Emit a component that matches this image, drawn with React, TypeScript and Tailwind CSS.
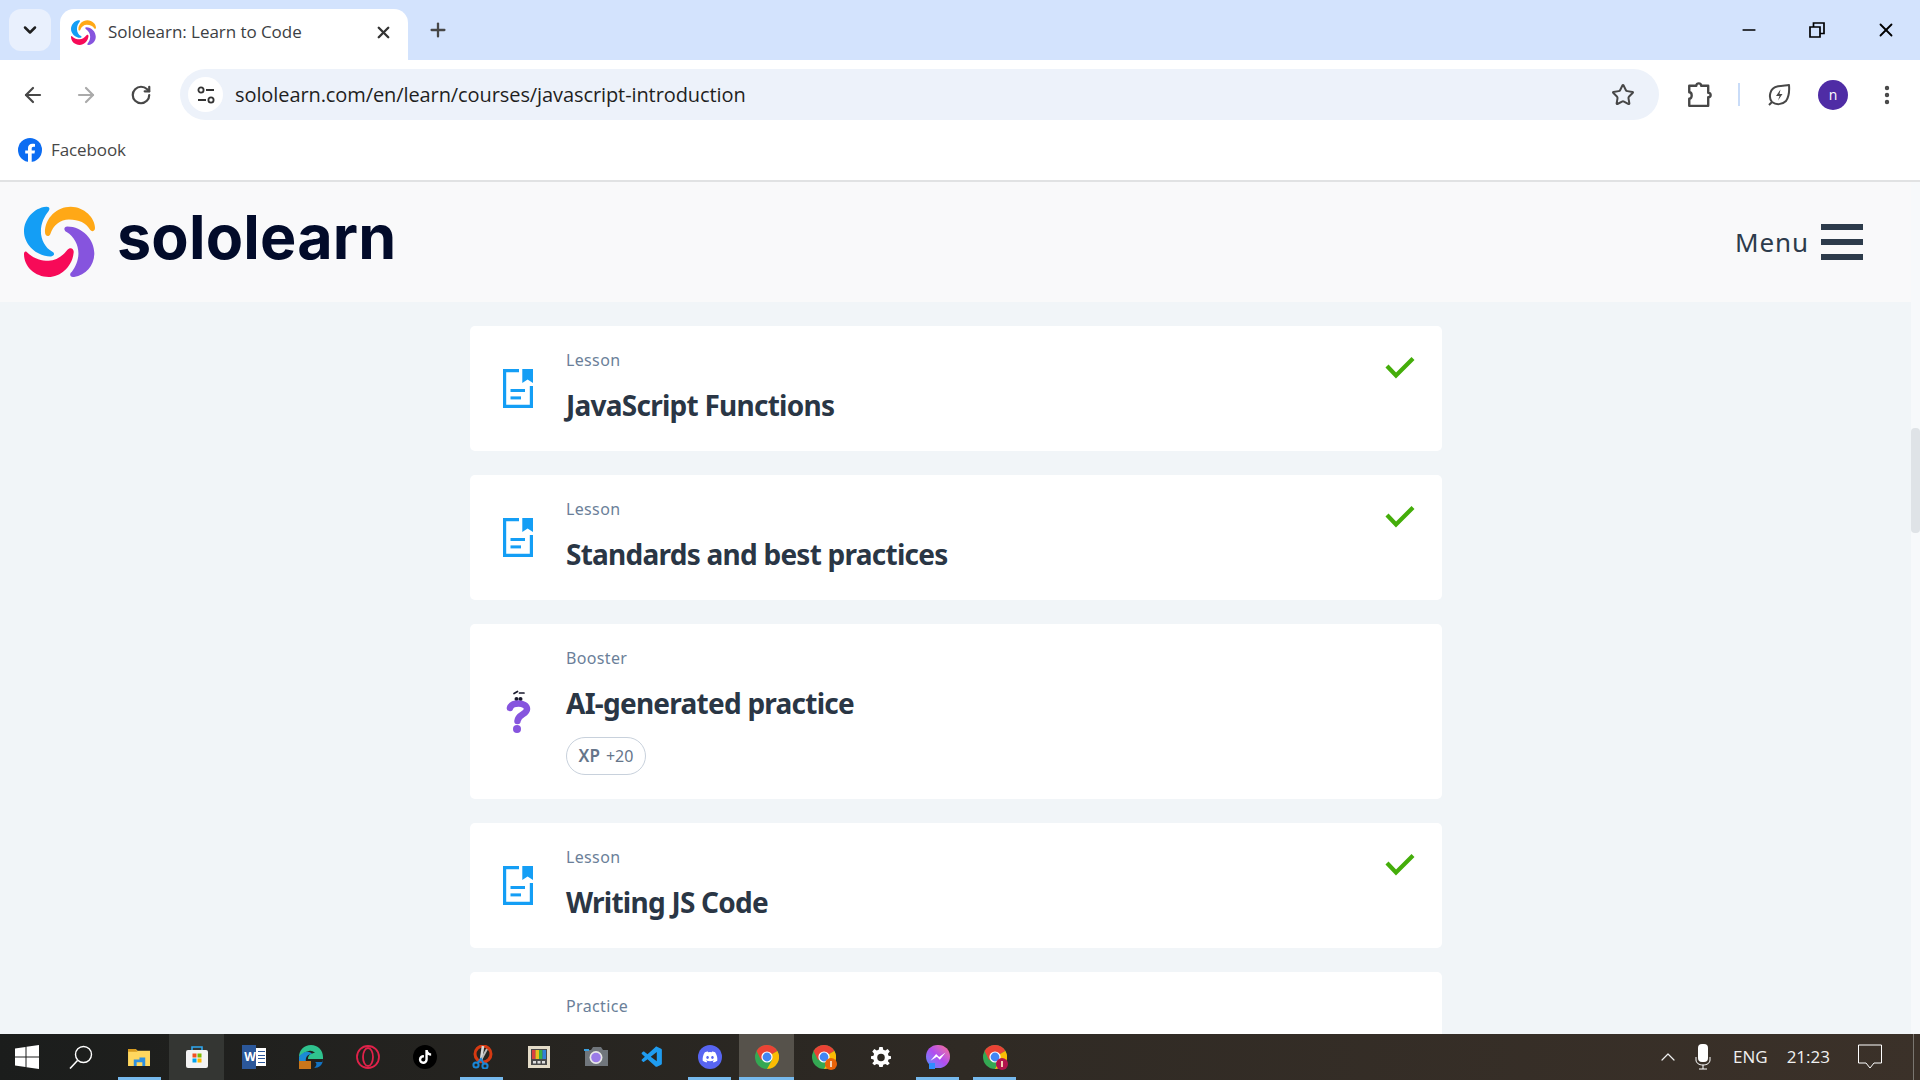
import { ArrowLeft, ArrowRight, ChevronDown, ChevronUp, EllipsisVertical, Minus, Plus, RotateCw, Star, X } from "lucide-react";
import { FaDiscord, FaTiktok } from "react-icons/fa";
import { VscVscode } from "react-icons/vsc";

function SoloLogo({ className }: { className: string }) {
  return (
    <svg viewBox="42 35 210 210" className={className}>
      <path fill="#149ef5" d="M108 37C70 40 42 75 42 110C42 150 80 185 122 184C132 183 134 174 126 170C105 160 92 135 92 110C92 85 103 65 115 50C120 42 116 36 108 37Z" />
      <path fill="#ffa816" d="M104 112C104 70 140 37 180 37C220 37 252 70 252 100C252 110 242 112 238 106C225 85 205 75 175 75C150 75 128 92 120 118C116 128 104 125 104 112Z" />
      <path fill="#8654de" d="M170 96C215 96 250 135 250 175C250 210 225 240 190 245C178 246 175 236 183 230C195 215 203 195 203 175C203 150 190 125 168 112C158 106 160 96 170 96Z" />
      <path fill="#f70a58" d="M50 171C70 190 90 197 115 197C135 197 155 185 170 165C178 155 190 160 189 172C185 215 150 245 115 245C75 245 42 215 42 178C42 170 46 168 50 171Z" />
    </svg>
  );
}

function LessonIcon() {
  return (
    <svg viewBox="0 0 30 39" className="w-[30px] h-[39px]">
      <path d="M16 1.6H1.6V37.4H28.4V17" fill="none" stroke="#149ef5" strokeWidth="3.2" />
      <path d="M19.3 0H30V14L24.6 10.5L19.3 14Z" fill="#149ef5" />
      <rect x="7.5" y="20" width="14.5" height="3" fill="#149ef5" />
      <rect x="7.5" y="27.4" width="10.5" height="3" fill="#149ef5" />
    </svg>
  );
}

function BoosterIcon() {
  return (
    <svg viewBox="0 0 25 43" className="w-[25px] h-[43px] ml-[3px]">
      <path d="M8 3.5L11.5 1.5M13.5 3H18" stroke="#1a1a2e" strokeWidth="1.7" fill="none" strokeLinecap="round" />
      <circle cx="10.5" cy="9" r="2" fill="#1a1a2e" />
      <circle cx="14.5" cy="9" r="2" fill="#1a1a2e" />
      <path d="M4 18C5 14.500 8.500 13.500 12.500 13.500C17 13.500 21 15.500 21 19C21 24.500 12 24 11.500 31" fill="none" stroke="#8654de" strokeWidth="6.5" strokeLinecap="round" />
      <circle cx="11" cy="39" r="4" fill="#8654de" />
    </svg>
  );
}

function Check() {
  return (
    <svg viewBox="0 0 30 23" className="w-[30px] h-[23px]">
      <path d="M2 10L11 19.5L28 2.5" fill="none" stroke="#44ad0a" strokeWidth="4.2" />
    </svg>
  );
}

function Card({ kind, title, done, xp }: { kind: string; title?: string; done?: boolean; xp?: boolean }) {
  return (
    <div className="flex items-center bg-white rounded-[5px] pl-[33px] pr-[27px]">
      <div className="w-[63px] shrink-0">{title ? (xp ? <BoosterIcon /> : <LessonIcon />) : null}</div>
      <div className={`flex-1 pt-[24px] ${xp ? "pb-[24px]" : title ? "pb-[28px]" : "pb-[60px]"}`}>
        <div className="text-[16px] leading-[21px] tracking-[0.35px] text-[#6b7f99] font-['Noto_Sans',sans-serif]">{kind}</div>
        {title && <div className="mt-[16px] text-[28px] leading-[36px] font-bold tracking-[-0.75px] text-[#2a3645] font-['Noto_Sans',sans-serif]">{title}</div>}
        {xp && (
          <div className="mt-[16px] w-[80px] h-[38px] border border-[#c8d1dc] rounded-[19px] flex items-center justify-center gap-[6px] text-[#66758a] font-['Noto_Sans',sans-serif]">
            <span className="text-[17px] font-semibold">XP</span>
            <span className="text-[16px]">+20</span>
          </div>
        )}
      </div>
      {done && <div className="self-start mt-[30px]"><Check /></div>}
    </div>
  );
}

function ChromeIcon({ badge }: { badge?: string }) {
  return (
    <div className="relative w-[24px] h-[24px]">
      <svg viewBox="0 0 24 24" className="w-[24px] h-[24px]">
        <circle cx="12" cy="12" r="12" fill="#34a853" />
        <path d="M12 12L22.4 6A12 12 0 0 0 1.6 6L6 15Z" fill="#ea4335" />
        <path d="M12 12L22.4 6A12 12 0 0 1 12 24L17 15Z" fill="#fbbc04" />
        <circle cx="12" cy="12" r="5.6" fill="white" />
        <circle cx="12" cy="12" r="4.4" fill="#4285f4" />
      </svg>
      {badge && (
        <div className="absolute -right-[1px] -bottom-[1px] w-[12px] h-[12px] rounded-full flex items-center justify-center" style={{ background: badge }}>
          <div className="w-[2px] h-[6px] bg-[#f5d0b5]" />
        </div>
      )}
    </div>
  );
}

function TaskCell({ children, open, active, hover }: { children: React.ReactNode; open?: boolean; active?: boolean; hover?: boolean }) {
  return (
    <div className={`relative h-full flex items-center justify-center ${active ? "bg-[#56524b] mx-px w-[55px]" : hover ? "bg-[#343633] mx-px w-[55px]" : "w-[57px]"}`}>
      {children}
      {open && <div className={`absolute bottom-0 h-[3px] bg-[#76b9ed] ${active ? "left-0 right-0" : "left-[7px] right-[7px]"}`} />}
    </div>
  );
}

export default function App() {
  return (
    <div className="w-[1920px] h-[1080px] flex flex-col overflow-hidden bg-white font-['Open_Sans',sans-serif]">
      {/* tab strip */}
      <div className="h-[60px] shrink-0 bg-[#d3e3fd] flex items-end relative">
        <div className="self-start mt-[9px] ml-[9px] w-[42px] h-[42px] rounded-[12px] bg-[#e9f0fd] flex items-center justify-center">
          <ChevronDown size={20} strokeWidth={3} className="text-[#1f1f1f]" />
        </div>
        <div className="ml-[9px] w-[348px] h-[51px] bg-white rounded-t-[14px] flex items-center pl-[11px] pr-[15px] pb-[5px]">
          <SoloLogo className="w-[25px] h-[25px]" />
          <span className="ml-[12px] text-[17px] tracking-[-0.05px] text-[#3c4043] flex-1">Sololearn: Learn to Code</span>
          <X size={19} strokeWidth={3} className="text-[#333]" />
        </div>
        <Plus size={22} strokeWidth={2.5} className="ml-[19px] mb-[19px] text-[#474747]" />
        <div className="ml-auto h-full flex items-center mr-[23px] gap-[50px]">
          <Minus size={20} strokeWidth={2} className="text-black" />
          <svg viewBox="0 0 16 16" className="w-[16px] h-[16px]"><path d="M1 5H11V15H1ZM4.5 5V1H15V11.5H11" fill="none" stroke="black" strokeWidth="1.7" /></svg>
          <X size={22} strokeWidth={2} className="text-black" />
        </div>
      </div>
      {/* toolbar */}
      <div className="h-[69px] shrink-0 flex items-center bg-white rounded-t-[12px] pl-[21px]">
        <ArrowLeft size={24} strokeWidth={2.2} className="text-[#474747]" />
        <ArrowRight size={24} strokeWidth={2.2} className="ml-[29px] text-[#aaaaaa]" />
        <RotateCw size={22} strokeWidth={2.4} className="ml-[32px] text-[#474747]" />
        <div className="ml-[28px] w-[1479px] h-[51px] rounded-full bg-[#edf2fa] flex items-center pl-[8px] pr-[24px]">
          <div className="w-[35px] h-[35px] rounded-full bg-white flex items-center justify-center">
            <svg viewBox="0 0 20 20" className="w-[20px] h-[20px]"><circle cx="5" cy="5" r="2.6" fill="none" stroke="#333" strokeWidth="1.8" /><path d="M10 5H18M2 15H10" stroke="#333" strokeWidth="1.8" /><circle cx="15" cy="15" r="2.6" fill="none" stroke="#333" strokeWidth="1.8" /></svg>
          </div>
          <span className="ml-[12px] text-[20px] tracking-[-0.09px] text-[#1f1f1f] flex-1">sololearn.com/en/learn/courses/javascript-introduction</span>
          <Star size={24} strokeWidth={2} className="text-[#474747]" />
        </div>
        <svg viewBox="0 0 24 24" className="ml-[27px] w-[26px] h-[26px]"><path d="M3 3.5H9.5C9.5 0.5 14 0.5 14 3.5H20.5V10C23.5 10 23.5 14 20.5 14V22H3V15.5C6 15.5 6 9.5 3 9.5Z" fill="none" stroke="#474747" strokeWidth="2.2" strokeLinejoin="round" /></svg>
        <div className="ml-[26px] w-[2px] h-[23px] bg-[#c9dcf8]" />
        <svg viewBox="0 0 24 24" className="ml-[27px] w-[24px] h-[24px]"><path d="M2 22L5 19C1 14 3 5 10 3.5C14 2.5 19 2.5 22 2C22.5 8 22 14 19 18C15 22 9 22 5 19" fill="none" stroke="#474747" strokeWidth="2" strokeLinejoin="round" /><path d="M13.5 6.5L9 13H12.5L11 17.5L15.5 11H12.5Z" fill="#474747" /></svg>
        <div className="ml-[27px] w-[30px] h-[30px] rounded-full bg-[#4f2ca5] text-white text-[14px] flex items-center justify-center">n</div>
        <EllipsisVertical size={24} strokeWidth={2.4} className="ml-[27px] text-[#474747]" />
      </div>
      {/* bookmarks */}
      <div className="h-[53px] shrink-0 border-b-2 border-[#e1e2e3] flex items-center pl-[18px] pb-[9px]">
        <svg viewBox="0 0 24 24" className="w-[24px] h-[24px]">
          <circle cx="12" cy="12" r="12" fill="#0b6cf2" />
          <path d="M16.5 15.5L17 12.5H13.7V10.4C13.7 9.5 14.2 8.7 15.5 8.7H17V6C17 6 15.7 5.8 14.4 5.8C11.7 5.8 10 7.4 10 10V12.5H7.2V15.5H10V24H13.7V15.5Z" fill="white" />
        </svg>
        <span className="ml-[9px] text-[17px] tracking-[-0.1px] text-[#474747]">Facebook</span>
      </div>
      {/* page */}
      <div className="flex-1 min-h-0 flex">
        <div className="flex-1 min-w-0 flex flex-col bg-[#f1f5f8] overflow-hidden">
          <div className="h-[120px] shrink-0 bg-[#f9f9fa] flex items-center pl-[24px] pr-[48px]">
            <SoloLogo className="w-[71px] h-[71px] -mt-[2px]" />
            <span className="ml-[22px] text-[61px] leading-none font-bold text-[#020b2a] font-[Inter,sans-serif] -mt-[10px] tracking-[0.2px]">sololearn</span>
            <span className="ml-auto text-[26px] tracking-[0.9px] text-[#2d3b4b] font-['Noto_Sans',sans-serif]">Menu</span>
            <div className="ml-[12px] w-[42px] flex flex-col gap-[9px]">
              <div className="h-[6px] bg-[#2d3b4b]" />
              <div className="h-[6px] bg-[#2d3b4b]" />
              <div className="h-[6px] bg-[#2d3b4b]" />
            </div>
          </div>
          <div className="w-[972px] ml-[470px] mt-[24px] flex flex-col gap-[24px]">
            <Card kind="Lesson" title="JavaScript Functions" done />
            <Card kind="Lesson" title="Standards and best practices" done />
            <Card kind="Booster" title="AI-generated practice" xp />
            <Card kind="Lesson" title="Writing JS Code" done />
            <Card kind="Practice" />
          </div>
        </div>
        <div className="w-[9px] shrink-0 bg-[#f7f9fb] pt-[246px]">
          <div className="w-[9px] h-[105px] rounded-[4px] bg-[#dfe3e7]" />
        </div>
      </div>
      {/* taskbar */}
      <div className="h-[46px] shrink-0 flex items-center bg-linear-to-r from-[#1b1d1c] via-[#2f2a24] via-50% to-[#3b3129] text-white">
        <div className="w-[54px] h-full flex items-center justify-center">
          <svg viewBox="0 0 24 24" className="w-[24px] h-[24px]"><path d="M0 3.4L10.5 2V11.5H0ZM11.5 1.8L24 0V11.5H11.5ZM0 12.5H10.5V22L0 20.6ZM11.5 12.5H24V24L11.5 22.2Z" fill="white" /></svg>
        </div>
        <div className="w-[54px] h-full flex items-center justify-center">
          <svg viewBox="0 0 24 24" className="w-[24px] h-[24px]"><circle cx="14.5" cy="9.5" r="8" fill="none" stroke="white" strokeWidth="1.4" /><path d="M8.5 15.5L1 23.5" stroke="white" strokeWidth="1.6" /></svg>
        </div>
        <div className="w-[3px]" />
        <TaskCell open>
          <svg viewBox="0 0 24 22" className="w-[23px] h-[21px]"><path d="M0 2H8L10 4H23V20H0Z" fill="#ffd75e" /><path d="M0 2H8L10 5H0Z" fill="#d79b1f" /><path d="M6 13H12V11H18V20H15V16H9V20H6Z" fill="#2d8fe0" /></svg>
        </TaskCell>
        <TaskCell hover>
          <svg viewBox="0 0 24 24" className="w-[24px] h-[24px]"><path d="M7 5V2H17V5" fill="none" stroke="#2fa8f0" strokeWidth="1.6" /><rect x="1" y="5" width="22" height="18" rx="2" fill="#f3f3f3" /><rect x="7.5" y="8.5" width="4" height="4" fill="#f25022" /><rect x="12.5" y="8.5" width="4" height="4" fill="#7fba00" /><rect x="7.5" y="13.5" width="4" height="4" fill="#00a4ef" /><rect x="12.5" y="13.5" width="4" height="4" fill="#ffb900" /></svg>
        </TaskCell>
        <TaskCell>
          <div className="relative w-[24px] h-[24px]">
            <div className="absolute right-0 top-[3px] w-[13px] h-[18px] bg-white flex flex-col justify-around py-[2px] pl-[5px] pr-[1px]">
              <div className="h-[1px] bg-[#2b579a]" /><div className="h-[1px] bg-[#2b579a]" /><div className="h-[1px] bg-[#2b579a]" /><div className="h-[1px] bg-[#2b579a]" />
            </div>
            <div className="absolute left-0 top-0 w-[14px] h-[24px] bg-[#2b579a] flex items-center justify-center pl-[3px] text-[12px] font-bold text-white">W</div>
          </div>
        </TaskCell>
        <TaskCell>
          <div className="relative w-[24px] h-[24px]">
            <svg viewBox="0 0 24 24" className="w-[24px] h-[24px]"><path d="M0 12C0 5 5 0 12 0C19 0 24 5 24 12V14H9C9 10 12 8 16 8C14 6 12 5.500 10 6C5 7 3 10 0 12Z" fill="#2fc28e" /><path d="M24 14C24 20 20 23 15 23C18 21 18 18 16 17H24Z" fill="#1273c4" /><path d="M0 12C3 7 10 5 13 9C8 9 6 13 7 17H0Z" fill="#1b8ad6" /></svg>
            <div className="absolute left-0 bottom-0 w-[12px] h-[8px] bg-[#c8761b]" />
          </div>
        </TaskCell>
        <TaskCell>
          <svg viewBox="0 0 24 24" className="w-[24px] h-[24px]"><circle cx="12" cy="12" r="11" fill="none" stroke="#e0224a" strokeWidth="1.8" /><ellipse cx="12" cy="12" rx="5" ry="9" fill="none" stroke="#e0224a" strokeWidth="1.8" /></svg>
        </TaskCell>
        <TaskCell>
          <div className="w-[24px] h-[24px] rounded-full bg-black flex items-center justify-center">
            <FaTiktok size={14} className="text-white" />
          </div>
        </TaskCell>
        <TaskCell open>
          <svg viewBox="0 0 24 24" className="w-[24px] h-[24px]"><circle cx="13" cy="9" r="8" fill="none" stroke="#d63a12" strokeWidth="3" /><path d="M13 1L11 15" stroke="#d8d8d8" strokeWidth="2.6" /><path d="M17 4L11 15" stroke="#bbbbbb" strokeWidth="2" /><circle cx="6" cy="20" r="2.6" fill="none" stroke="#1a86d6" strokeWidth="2" /><circle cx="15" cy="21" r="2.6" fill="none" stroke="#1a86d6" strokeWidth="2" /><path d="M7.500 18L11 14L14 19" fill="none" stroke="#1a86d6" strokeWidth="2" /></svg>
        </TaskCell>
        <TaskCell>
          <svg viewBox="0 0 22 22" className="w-[22px] h-[22px]"><rect x="0" y="0" width="22" height="22" fill="#e4dcc8" /><rect x="3" y="3" width="16" height="16" fill="#4a4a4a" /><rect x="4" y="4" width="3.500" height="9" fill="#d94040" /><rect x="7.500" y="4" width="3.500" height="9" fill="#e8c020" /><rect x="11" y="4" width="3.500" height="9" fill="#38b048" /><rect x="14.500" y="4" width="3.500" height="9" fill="#3080d8" /><rect x="5" y="15" width="3" height="2.500" fill="#ddd" /><rect x="9.500" y="15" width="3" height="2.500" fill="#ddd" /><rect x="14" y="15" width="3" height="2.500" fill="#ddd" /></svg>
        </TaskCell>
        <TaskCell>
          <svg viewBox="0 0 24 20" className="w-[24px] h-[20px]"><path d="M1 3H7L9 0H17L19 3H24V19H1Z" fill="#70767c" /><rect x="0" y="2" width="5" height="2" fill="#3aa0e0" /><circle cx="12" cy="10.500" r="6.500" fill="#e8e8e8" /><circle cx="12" cy="10.500" r="4.800" fill="#9a7be8" /></svg>
        </TaskCell>
        <TaskCell>
          <VscVscode size={25} className="text-[#1f9cf0]" />
        </TaskCell>
        <TaskCell open>
          <div className="w-[24px] h-[24px] rounded-full bg-[#5865f2] flex items-center justify-center">
            <FaDiscord size={16} className="text-white" />
          </div>
        </TaskCell>
        <TaskCell open active>
          <ChromeIcon />
        </TaskCell>
        <TaskCell>
          <ChromeIcon badge="#e8630a" />
        </TaskCell>
        <TaskCell>
          <svg viewBox="0 0 24 24" className="w-[20px] h-[20px]"><path fill="white" d="M10 0H14L14.700 3.200L17.200 4.200L20 2.500L22.500 5.500L20.300 8L21 10.500L24 11V14L21 15L20.300 17L22.500 19.500L20 22L17.200 20.300L14.700 21.300L14 24H10L9.300 21.300L6.800 20.300L4 22L1.500 19.500L3.700 17L3 15L0 14V11L3 10.500L3.700 8L1.500 5.500L4 2.500L6.800 4.200L9.300 3.200Z" /><circle cx="12" cy="12.500" r="4.500" fill="#2c2822" /></svg>
        </TaskCell>
        <TaskCell open>
          <div className="relative w-[24px] h-[24px]">
            <div className="w-[24px] h-[23px] rounded-full bg-linear-to-tr from-[#2f8cff] via-[#b14cf0] to-[#ff6a88]" />
            <div className="absolute left-[3px] bottom-0 w-[6px] h-[6px] bg-[#2f8cff]" />
            <svg viewBox="0 0 24 24" className="absolute left-[3px] top-[3px] w-[18px] h-[18px]"><path d="M2 17L9.500 8L13.500 12L22 6L14.500 15.500L10.500 11.500Z" fill="white" /></svg>
          </div>
        </TaskCell>
        <TaskCell open>
          <ChromeIcon badge="#b3134d" />
        </TaskCell>
        <div className="ml-auto h-full flex items-center text-[#f0f0f0]">
          <ChevronUp size={24} strokeWidth={1.2} />
          <svg viewBox="0 0 16 26" className="ml-[15px] w-[16px] h-[26px]"><rect x="3" y="0" width="10" height="18" rx="4" fill="white" /><path d="M1 13V16C1 19 4 21 8 21C12 21 15 19 15 16V13M8 21V25M4 25H12" fill="none" stroke="white" strokeWidth="1" /></svg>
          <span className="ml-[22px] text-[17px]">ENG</span>
          <span className="ml-[19px] text-[17px]">21:23</span>
          <svg viewBox="0 0 24 26" className="ml-[28px] w-[24px] h-[26px]"><path d="M0.500 1H23.500V19H16L12 24L8 19H0.500Z" fill="none" stroke="white" strokeWidth="1" /></svg>
          <div className="ml-[31px] mr-[6px] w-px h-full bg-[#7a7670]" />
        </div>
      </div>
    </div>
  );
}
